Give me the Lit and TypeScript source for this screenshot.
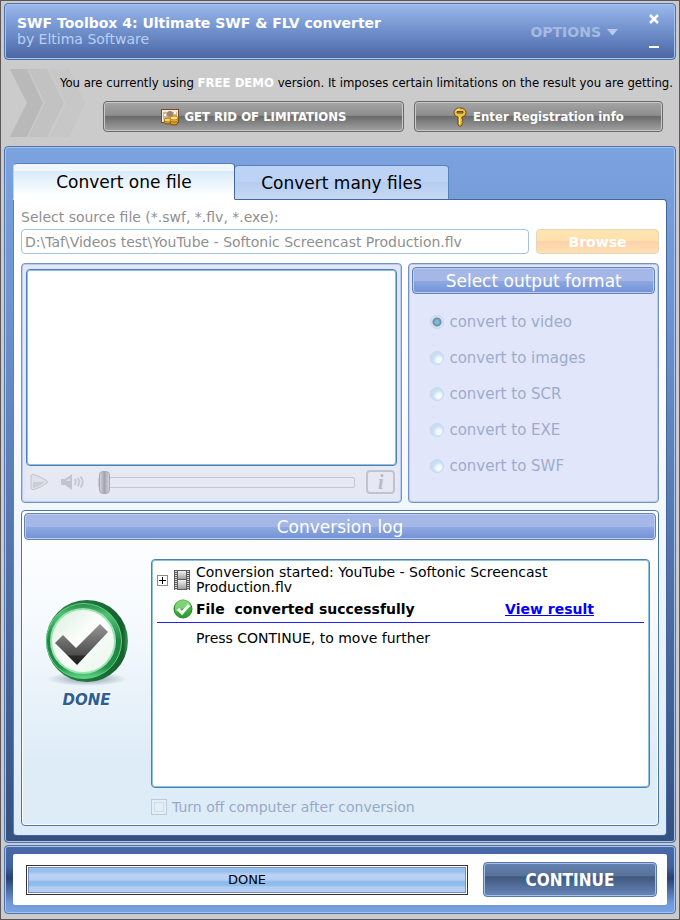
import { LitElement, html, css, svg } from "lit";
import { customElement, state } from "lit/decorators.js";
import { classMap } from "lit/directives/class-map.js";

const FORMATS = ["video", "images", "SCR", "EXE", "SWF"];

const moneyIcon = svg`<svg width="20" height="18" viewBox="0 0 20 18" aria-hidden="true">
  <rect x="1.500" y="1.500" width="17" height="13" fill="#f5e9d6" stroke="#7a4a2c"/>
  <rect x="3" y="4" width="14" height="7" fill="#cdb79c"/>
  <circle cx="10" cy="6" r="3" fill="#a08468"/>
  <rect x="4" y="6" width="2" height="2" fill="#fff"/><rect x="14" y="4" width="2" height="2" fill="#fff"/>
  <ellipse cx="8" cy="14" rx="4" ry="2" fill="#e0a92c" stroke="#7d5510"/>
  <ellipse cx="8" cy="12" rx="4" ry="2" fill="#f6d565" stroke="#a9771c"/>
  <ellipse cx="14" cy="15" rx="4" ry="2" fill="#d99b22" stroke="#7d5510"/>
  <ellipse cx="14" cy="12" rx="4" ry="2" fill="#eebc3c" stroke="#a9771c"/>
  <ellipse cx="14" cy="10" rx="4" ry="2" fill="#fbe27d" stroke="#b98524"/>
</svg>`;

const keyIcon = svg`<svg width="14" height="20" viewBox="0 0 14 20" aria-hidden="true">
  <path d="M7 1C3.500 1 1 3 1 5.500C1 8 3 9.500 5 10V18L7 19.500L9 18V16.500L10 15.500L9 14.500L10 13L9 12V10C11 9.500 13 8 13 5.500C13 3 10.500 1 7 1ZM4 4.500H10V6H4Z" fill="#efc142" fill-rule="evenodd" stroke="#6d4a0e"/>
  <path d="M3 4C4 2.500 5.500 2 7 2M6.500 10V17" fill="none" stroke="#fff0a8"/>
</svg>`;

const arrows = svg`<svg class="arrows" width="76" height="70" viewBox="0 0 76 70" aria-hidden="true">
  <path d="M40 0H59L75 34L59 68H40L56 34Z" fill="#c7c7c7"/>
  <path d="M18 0H37L54 34L37 68H18L35 34Z" fill="#c2c2c2"/>
  <path d="M0 0H17L33 34L17 68H0L17 34Z" fill="#b9b9b9"/>
</svg>`;

const playIcon = svg`<svg width="20" height="20" viewBox="0 0 20 20" aria-hidden="true">
  <path d="M2 4Q2 2 5 2.500Q11 4 18 9Q19 10 18 11Q11 16 5 17.500Q2 18 2 16Z" fill="#dfe0ea" stroke="#c3c4d0"/>
  <path d="M4 10H16Q11 14 4 16Z" fill="#cbccd8"/>
</svg>`;

const soundIcon = svg`<svg width="26" height="20" viewBox="0 0 26 20" aria-hidden="true">
  <path d="M1 7H5L12 2V18L5 13H1Z" fill="#c3c4d0"/><path d="M3 9H6L10 6V9Z" fill="#dddee8"/>
  <path d="M14.500 7Q17 10 14.500 13M17.500 6Q21 10 17.500 14M20.500 4.500Q25 10 20.500 15.500" fill="none" stroke="#c9cad6" stroke-width="2"/>
</svg>`;

const doneBadge = svg`<svg width="84" height="88" viewBox="0 0 84 88" aria-hidden="true">
  <defs>
    <linearGradient id="rim" x1="0" y1="0" x2="1" y2="0">
      <stop offset="0" stop-color="#2c8a4b"/><stop offset=".6" stop-color="#1d7038"/><stop offset=".94" stop-color="#17602f"/><stop offset="1" stop-color="#3d9b5c"/>
    </linearGradient>
    <linearGradient id="ring" x1="0" y1="0" x2="0" y2="1">
      <stop offset="0" stop-color="#2a8a49"/><stop offset=".15" stop-color="#52c274"/>
      <stop offset=".5" stop-color="#1d8443"/><stop offset=".85" stop-color="#22934a"/><stop offset="1" stop-color="#5fdc88"/>
    </linearGradient>
    <linearGradient id="face" x1="0" y1="0" x2="1" y2="1">
      <stop offset="0" stop-color="#d9eede"/><stop offset=".45" stop-color="#fbfefb"/><stop offset="1" stop-color="#eaf5ec"/>
    </linearGradient>
    <linearGradient id="tick" x1="0" y1="0" x2="0" y2="1">
      <stop offset="0" stop-color="#969696"/><stop offset=".75" stop-color="#4e4e4e"/>
      <stop offset=".78" stop-color="#2b2b2b"/><stop offset="1" stop-color="#1f1f1f"/>
    </linearGradient>
    <radialGradient id="shade"><stop offset="0" stop-color="#8b9aa5"/><stop offset="1" stop-color="#8b9aa5" stop-opacity="0"/></radialGradient>
  </defs>
  <ellipse cx="42" cy="80" rx="40" ry="7" fill="url(#shade)"/>
  <circle cx="42" cy="42" r="41" fill="url(#rim)"/>
  <circle cx="39" cy="42" r="37.500" fill="url(#ring)" stroke="#63cf85"/>
  <circle cx="38" cy="42" r="33" fill="#9be3b0"/>
  <circle cx="38" cy="42" r="31" fill="url(#face)"/>
  <path d="M10 44L18 36L31 49L55 25L63 33L32 66Z" fill="url(#tick)"/>
</svg>`;

const filmIcon = svg`<svg width="16" height="20" viewBox="0 0 16 20" aria-hidden="true">
  <defs><linearGradient id="film" x1="0" y1="0" x2="0" y2="1"><stop offset="0" stop-color="#f2f2f2"/><stop offset="1" stop-color="#9f9f9f"/></linearGradient></defs>
  <rect width="16" height="20" fill="#5c5c5c"/>
  <rect x="4" y="1" width="8" height="8" fill="url(#film)"/><rect x="4" y="10" width="8" height="9" fill="url(#film)"/>
  <path d="M2 1V20M14 1V20" stroke="#dcdcdc" stroke-width="2" stroke-dasharray="1 1"/>
</svg>`;

const okIcon = svg`<svg width="20" height="20" viewBox="0 0 20 20" aria-hidden="true">
  <defs><linearGradient id="ok" x1="0" y1="0" x2="0" y2="1"><stop offset="0" stop-color="#59c84c"/><stop offset="1" stop-color="#2a9a32"/></linearGradient></defs>
  <circle cx="10" cy="10" r="9" fill="url(#ok)" stroke="#1f8a2b"/>
  <path d="M2 9A8 8 0 0 1 18 8Q10 8 3 13Z" fill="#9be48d" opacity=".6"/>
  <path d="M5 10L9 14L16 6" fill="none" stroke="#fff" stroke-width="3"/>
</svg>`;

@customElement("app-root")
export class AppRoot extends LitElement {
  @state() private tab = 0;

  static styles = css`
    :host {
      display: block;
      font: 14px/16px "DejaVu Sans", Verdana, sans-serif;
      color: #000;
    }
    * { box-sizing: border-box; }
    button, input { font: inherit; color: inherit; margin: 0; }
    button { display: flex; align-items: center; justify-content: center; padding: 0; border: 0; background: none; white-space: nowrap; }
    svg { display: block; flex: none; }
    .window {
      min-height: 100vh;
      display: flex;
      flex-direction: column;
      padding: 2px 3px 5px;
      background: #cbcbcb;
      border: 1px solid #5b565b;
    }
    .frame { border: 1px solid #4d73ad; border-radius: 4px; box-shadow: inset 0 0 0 1px #a9c4ef; }

    .titlebar {
      display: flex;
      height: 57px;
      padding: 9px 15px 0 12px;
      background: linear-gradient(#9ab8ec, #6f8fcb 50%, #4a66a3);
      color: #fff;
    }
    .names { flex: 1; padding-top: 2px; }
    .title { margin: 0; font-size: 14px; line-height: 16px; font-weight: bold; }
    .maker { margin: 0; color: #b8cff5; }
    .options { height: 38px; margin-right: 30px; gap: 6px; color: #a6b9e0; font-weight: bold; }
    .winbuttons { display: flex; flex-direction: column; justify-content: space-between; height: 40px; }
    .winbuttons button { width: 12px; height: 12px; }

    .notice { display: flex; height: 86px; padding: 9px 3px 0 6px; }
    .arrows { margin-right: -28px; }
    .notice-body { position: relative; flex: 1; display: flex; flex-direction: column; font: 13px/16px "DejaVu Sans Condensed", Tahoma, sans-serif; }
    .notice-text { margin: 6px 0 10px; text-align: right; white-space: nowrap; }
    .notice-text strong { color: #fff; }
    .notice-buttons { display: flex; gap: 10px; padding: 0 10px 0 45px; }
    .grey {
      height: 31px;
      gap: 4px;
      border: 1px solid #6a6a6a;
      border-radius: 4px;
      box-shadow: inset 0 0 0 1px #c9c9c9;
      background: linear-gradient(#a5a5a5, #8d8d8d 46%, #6b6b6b 50%, #a2a2a2);
      color: #fff;
      font-weight: bold;
    }
    .buy { flex: 301; }
    .register { flex: 249; gap: 6px; }

    .main {
      flex: 1;
      display: flex;
      flex-direction: column;
      padding: 16px 8px 6px;
      background: linear-gradient(#7ca3df, #6f94d0 22%, #5676ae 55%, #36507f);
    }
    .tabs { display: flex; align-items: flex-end; height: 37px; font-size: 17px; }
    .tab { border: 1px solid #5681c0; border-radius: 4px 4px 0 0; }
    .tab.first { width: 222px; }
    .tab.second { width: 214px; }
    .tab.off { height: 35px; background: linear-gradient(#bcd3f5 50%, #b5cdf0 50%, #c6d9f4); }
    .tab.off.second { border-left: 0; }
    .tab.on { position: relative; height: 37px; border-color: #5681c0 #42679f #fff #b9d3f4; background: linear-gradient(#eff7fd 20%, #d8eaf8 20%, #fff 90%); }
    .page {
      flex: 1;
      display: flex;
      flex-direction: column;
      padding: 9px 7px 9px;
      margin-top: -1px;
      border: 1px solid #42679f;
      border-left-color: #5681c0;
      border-radius: 0 4px 4px 4px;
      background: linear-gradient(#fff 20%, #f3f8fd 45%, #dcebf7);
    }
    .source-label { color: #8f8f8f; margin-bottom: 4px; }
    .source { display: flex; gap: 7px; margin-bottom: 9px; }
    .path { flex: 1; min-width: 0; height: 25px; padding: 0 3px; border: 1px solid #a4c3e0; border-radius: 4px; background: #fff; color: #8f8f8f; }
    .browse { width: 123px; border: 1px solid #e3d6b8; border-radius: 4px; background: linear-gradient(#fee6b0, #fde0ae 46%, #fdd2aa 50%, #fee0b4); color: #fff; font-weight: bold; }
    .panels { display: grid; grid-template-columns: 382fr 251fr; gap: 6px; margin-bottom: 7px; }
    .panel { height: 240px; padding: 5px 4px 4px; border: 1px solid #7494c4; border-radius: 4px; box-shadow: inset 0 0 0 1px #bccbe9; background: #e1e6fa; }
    .player { display: flex; flex-direction: column; }
    .screen, .entries { border: 1px solid #4a80b3; border-radius: 4px; box-shadow: inset 0 0 0 1px #8fc0dc; background: #fff; }
    .screen { height: 197px; }
    .controls { flex: 1; display: flex; align-items: center; padding: 0 2px 0 3px; background: #e6e8f4; }
    .sound { margin-left: 11px; }
    .seek { flex: 1; min-width: 0; height: 24px; margin: 0 11px 0 12px; appearance: none; background: none; }
    .seek::-webkit-slider-runnable-track { height: 11px; border: 1px solid #c6c7d4; border-radius: 2px; background: #e6e8f4; }
    .seek::-webkit-slider-thumb { appearance: none; width: 11px; height: 23px; margin-top: -7px; border: 1px solid #a9aab8; border-radius: 4px; background: linear-gradient(90deg, #d0d1db, #a2a4b0 50%, #d0d1db); }
    .info { width: 29px; height: 24px; border: 2px solid #c2c3d2; border-radius: 4px; color: #b9bac8; font: italic bold 20px/20px "Liberation Serif", serif; }
    .bar {
      display: flex;
      align-items: center;
      justify-content: center;
      height: 27px;
      margin: 0;
      border: 1px solid #6583bb;
      border-radius: 4px;
      box-shadow: inset 0 0 0 1px #bccdf0;
      background: linear-gradient(#a4b7e7 50%, #8fa8e0 52%, #7291d6);
      color: #fff;
      font-size: 17px;
      line-height: 20px;
      font-weight: normal;
    }
    .formats { min-width: 0; padding: 3px 3px 4px; }
    .choices { display: grid; grid-auto-rows: 20px; gap: 16px; padding: 18px 16px 0 18px; }
    .choice { display: flex; align-items: center; gap: 5px; color: #9eaccb; font-size: 15px; }
    .choice input { appearance: none; width: 14px; height: 14px; border: 1px solid #c3d8f0; border-radius: 50%; background: radial-gradient(circle at 8px 8px, #f4faff 2px, #c8def4 6px); }
    .choice input:checked { background: radial-gradient(circle, #7fbfe6 1px, #6f8c9f 4px, #d5e3f2 5px); }

    .log { flex: 1; display: flex; flex-direction: column; padding: 2px; border: 1px solid #4d74ad; border-radius: 4px; box-shadow: inset 0 0 0 1px #fff; background: linear-gradient(#fff, #f6fafe 35%, #deecf7 80%); }
    .log-body { flex: 1; display: grid; grid-template-columns: 127px 1fr; grid-template-rows: 1fr auto; padding: 19px 6px 8px 0; }
    .status { display: flex; flex-direction: column; align-items: center; gap: 4px; padding: 40px 2px 0 0; }
    .status-text { color: #2f5e93; font: italic 900 15px/18px "DejaVu Sans", sans-serif; text-shadow: 0 0 3px #fff; }
    .entries { margin: 0; padding: 5px; list-style: none; }
    .entry { display: flex; align-items: center; padding-left: 39px; }
    .started { padding-left: 0; line-height: 15px; }
    .expand { width: 11px; height: 11px; border: 1px solid #8f8f7c; background: #fff; flex: none; margin-right: 6px; }
    .started svg { margin-right: 6px; }
    .started .expand svg { margin: 0; }
    .finished { height: 28px; padding-left: 16px; font-weight: bold; white-space: pre; border-bottom: 1px solid #1f1fff; }
    .finished svg { margin-right: 3px; }
    .finished a { margin: 0 50px 0 auto; color: #00f; }
    .further { padding-top: 7px; }
    .turnoff { grid-column: 2; display: flex; align-items: center; gap: 5px; margin-top: 11px; color: #98a9c8; }
    .turnoff input { appearance: none; width: 16px; height: 16px; border: 1px solid #bccbd6; background: #e4eef6; box-shadow: inset 0 0 0 2px #e4eef6, inset 0 0 0 3px #d0dde8; }

    .footer { margin-top: 2px; padding: 8px; background: linear-gradient(#4a69a8, #42619f 30%, #2a4170 48%, #6f98d9 85%, #7ba4e2); }
    .footer-body { display: flex; align-items: center; gap: 15px; height: 51px; padding: 0 10px 0 13px; border-radius: 2px; background: #fff; }
    .progress {
      flex: 1;
      height: 30px;
      padding: 5px 0;
      border: 1px solid #333;
      box-shadow: inset 0 0 0 1px #fff, inset 0 0 0 2px #7e8dc0;
      background: linear-gradient(#a9c9f2, #8fbeeb 18%, #bdd3f7 32%, #b3cdf4 50%, #8ebbea 56%, #8fbfe9 70%, #b3cdf4 75%, #b9cff3);
      text-align: center;
      font-size: 13px;
      line-height: 18px;
    }
    .continue { width: 174px; height: 35px; border: 1px solid #5878ac; border-radius: 4px; box-shadow: inset 0 0 0 1px #a9c0e6; background: linear-gradient(#6482b2, #587299 38%, #3f587e 42%, #6886ba); color: #fff; font: bold 17px/20px "DejaVu Sans Condensed", Tahoma, sans-serif; }
  `;

  render() {
    return html`
      <div class="window">
        <header class="titlebar frame">
          <div class="names">
            <h1 class="title">SWF Toolbox 4: Ultimate SWF &amp; FLV converter</h1>
            <p class="maker">by Eltima Software</p>
          </div>
          <button class="options" aria-haspopup="menu">OPTIONS
            <svg width="11" height="7" viewBox="0 0 11 7" aria-hidden="true"><path d="M0 0H11L6 6H5Z" fill="#b9c9ea"/></svg>
          </button>
          <div class="winbuttons">
            <button aria-label="Close"><svg width="12" height="12" viewBox="0 0 12 12"><path d="M2 2L10 10M10 2L2 10" stroke="#fff" stroke-width="2.500"/></svg></button>
            <button aria-label="Minimize"><svg width="12" height="12" viewBox="0 0 12 12"><path d="M1 6H11" stroke="#fff" stroke-width="2"/></svg></button>
          </div>
        </header>

        <section class="notice">
          ${arrows}
          <div class="notice-body">
            <p class="notice-text">You are currently using <strong>FREE DEMO</strong> version. It imposes certain limitations on the result you are getting.</p>
            <div class="notice-buttons">
              <button class="grey buy">${moneyIcon}GET RID OF LIMITATIONS</button>
              <button class="grey register">${keyIcon}Enter Registration info</button>
            </div>
          </div>
        </section>

        <main class="main frame">
          <div class="tabs" role="tablist">
            ${["Convert one file", "Convert many files"].map((name, i) => html`
              <button role="tab" aria-selected=${this.tab === i}
                class=${classMap({ tab: true, first: i === 0, second: i === 1, on: this.tab === i, off: this.tab !== i })}
                @click=${() => (this.tab = i)}>${name}</button>`)}
          </div>
          <div class="page" role="tabpanel">
            <label class="source-label" for="path">Select source file (*.swf, *.flv, *.exe):</label>
            <div class="source">
              <input class="path" id="path" type="text" disabled value="D:\\Taf\\Videos test\\YouTube - Softonic Screencast Production.flv">
              <button class="browse" disabled>Browse</button>
            </div>
            <div class="panels">
              <section class="panel player">
                <div class="screen"></div>
                <div class="controls">
                  <button aria-label="Play" disabled>${playIcon}</button>
                  <button class="sound" aria-label="Sound" disabled>${soundIcon}</button>
                  <input class="seek" type="range" min="0" max="100" value="0" aria-label="Position" disabled>
                  <button class="info" disabled>i</button>
                </div>
              </section>
              <section class="panel formats">
                <h2 class="bar">Select output format</h2>
                <div class="choices" role="radiogroup">
                  ${FORMATS.map((f, i) => html`
                    <label class="choice"><input type="radio" name="format" disabled ?checked=${i === 0}>convert to ${f}</label>`)}
                </div>
              </section>
            </div>
            <section class="log">
              <h2 class="bar">Conversion log</h2>
              <div class="log-body">
                <div class="status">${doneBadge}<span class="status-text">DONE</span></div>
                <ul class="entries">
                  <li class="entry started">
                    <button class="expand" aria-label="Expand"><svg width="9" height="9" viewBox="0 0 9 9"><path d="M1 4H8V5H1ZM4 1H5V8H4Z" fill="#000"/></svg></button>
                    ${filmIcon}<span>Conversion started: YouTube - Softonic Screencast Production.flv</span>
                  </li>
                  <li class="entry finished">${okIcon}<span>File  converted successfully</span><a href="#result">View result</a></li>
                  <li class="entry further">Press CONTINUE, to move further</li>
                </ul>
                <label class="turnoff"><input type="checkbox" disabled>Turn off computer after conversion</label>
              </div>
            </section>
          </div>
        </main>

        <footer class="footer frame">
          <div class="footer-body">
            <div class="progress" role="progressbar" aria-valuenow="100" aria-label="Conversion">DONE</div>
            <button class="continue">CONTINUE</button>
          </div>
        </footer>
      </div>
    `;
  }
}
